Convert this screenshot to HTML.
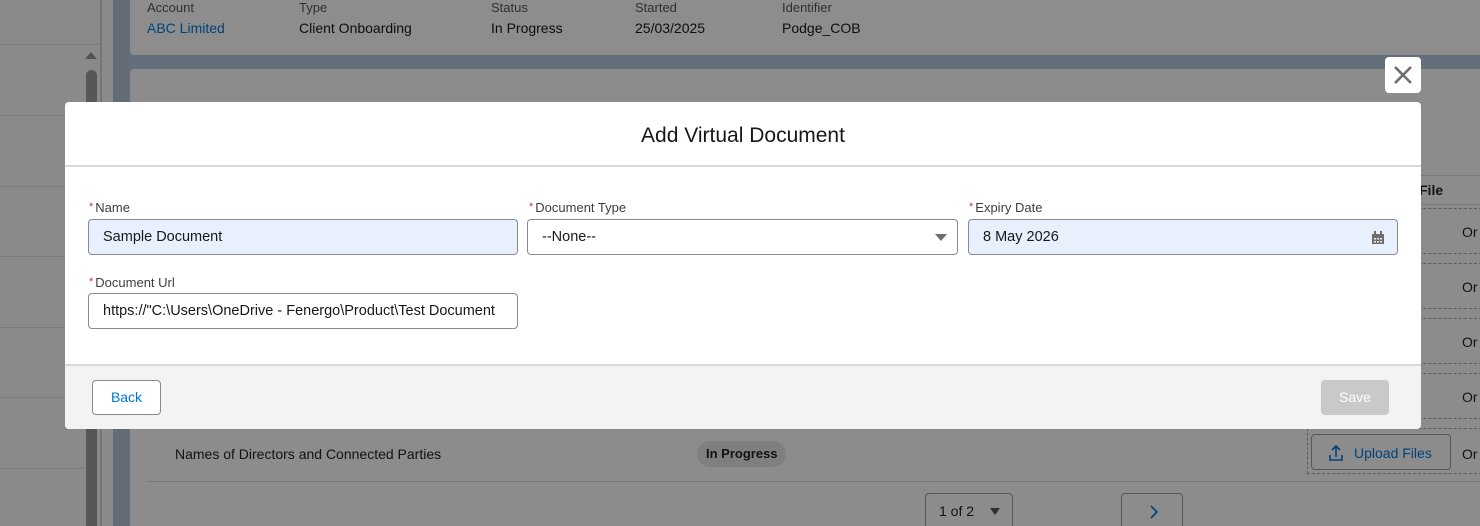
<!DOCTYPE html>
<html style="width:1480px;height:526px;overflow:hidden"><head><style>
*{box-sizing:border-box;margin:0;padding:0}
body{width:1480px;height:526px;overflow:hidden;background:#f3f3f3;font-family:"Liberation Sans",sans-serif;position:relative;color:#181818}
.a{position:absolute}
.t{font-size:14px;white-space:nowrap}
.lbl{font-size:13px;color:#3e3e3e;position:absolute;white-space:nowrap}
.lbl b{color:#c23934;font-weight:normal;font-size:11px;margin-right:2px;position:relative;top:-2px}
.in{position:absolute;height:36px;border:1px solid #8a8a8a;border-radius:4px;font-size:14.5px;padding:0 14px;line-height:34px;white-space:nowrap;overflow:hidden;color:#181818}
.dash{position:absolute;left:1307px;width:180px;border:1px dashed #a0a0a0}
</style></head><body>
<div class="a" style="left:0;top:0;width:100px;height:526px;background:#f3f3f3"></div>
<div class="a" style="left:0;top:44px;width:100px;height:1px;background:#d8d8d8"></div>
<div class="a" style="left:0;top:115px;width:84px;height:1px;background:#d8d8d8"></div>
<div class="a" style="left:0;top:186px;width:84px;height:1px;background:#d8d8d8"></div>
<div class="a" style="left:0;top:256px;width:84px;height:1px;background:#d8d8d8"></div>
<div class="a" style="left:0;top:327px;width:84px;height:1px;background:#d8d8d8"></div>
<div class="a" style="left:0;top:397px;width:84px;height:1px;background:#d8d8d8"></div>
<div class="a" style="left:0;top:468px;width:84px;height:1px;background:#d8d8d8"></div>
<div class="a" style="left:85px;top:52px;width:0;height:0;border-left:6px solid transparent;border-right:6px solid transparent;border-bottom:7px solid #909090"></div>
<div class="a" style="left:86px;top:70px;width:11px;height:456px;background:#999;border-radius:5px 5px 0 0"></div>
<div class="a" style="left:100px;top:0;width:2px;height:526px;background:#d0d0d0"></div>
<div class="a" style="left:113px;top:0;width:16px;height:526px;background:#aebccd"></div>
<div class="a" style="left:129px;top:0;width:1351px;height:526px;background:#b2c3da"></div>
<div class="a" style="left:130px;top:-6px;width:1360px;height:61px;background:#f8f8f8;border-radius:4px"></div>
<div class="a t" style="left:147px;top:0;font-size:13px;color:#555">Account</div>
<div class="a t" style="left:147px;top:20px;color:#0176d3">ABC Limited</div>
<div class="a t" style="left:299px;top:0;font-size:13px;color:#555">Type</div>
<div class="a t" style="left:299px;top:20px">Client Onboarding</div>
<div class="a t" style="left:491px;top:0;font-size:13px;color:#555">Status</div>
<div class="a t" style="left:491px;top:20px">In Progress</div>
<div class="a t" style="left:635px;top:0;font-size:13px;color:#555">Started</div>
<div class="a t" style="left:635px;top:20px">25/03/2025</div>
<div class="a t" style="left:782px;top:0;font-size:13px;color:#555">Identifier</div>
<div class="a t" style="left:782px;top:20px">Podge_COB</div>
<div class="a" style="left:130px;top:69px;width:1360px;height:470px;background:#f6f6f6;border-radius:4px"></div>
<div class="a" style="left:1307px;top:175px;width:180px;height:1px;background:#d8d8d8"></div>
<div class="a t" style="left:1419px;top:182px;font-weight:bold;color:#222">File</div>
<div class="a" style="left:1307px;top:204px;width:180px;height:1px;background:#d0d0d0"></div>
<div class="dash" style="top:208px;height:46px"></div>
<div class="dash" style="top:263px;height:46px"></div>
<div class="dash" style="top:318px;height:46px"></div>
<div class="dash" style="top:373px;height:46px"></div>
<div class="dash" style="top:428px;height:46px"></div>
<div class="a t" style="left:1462px;top:224px;color:#222">Or</div>
<div class="a t" style="left:1462px;top:279px;color:#222">Or</div>
<div class="a t" style="left:1462px;top:334px;color:#222">Or</div>
<div class="a t" style="left:1462px;top:389px;color:#222">Or</div>
<div class="a t" style="left:1462px;top:446px;color:#222">Or</div>
<div class="a" style="left:1311px;top:434px;width:140px;height:36px;border:1px solid #999;border-radius:4px"></div>
<svg class="a" style="left:1328px;top:444px" width="16" height="18" viewBox="0 0 16 18"><path d="M8 13V2M4 6l4-4 4 4M2 11v5h12v-5" fill="none" stroke="#0176d3" stroke-width="1.6"/></svg>
<div class="a t" style="left:1354px;top:445px;color:#0176d3">Upload Files</div>
<div class="a t" style="left:175px;top:446px;color:#222">Names of Directors and Connected Parties</div>
<div class="a" style="left:697px;top:441px;width:89px;height:26px;border-radius:13px;background:#e0e0e0"></div>
<div class="a t" style="left:706px;top:446px;font-size:13px;font-weight:bold;color:#222">In Progress</div>
<div class="a" style="left:148px;top:481px;width:1340px;height:1px;background:#cfcfcf"></div>
<div class="a" style="left:925px;top:493px;width:88px;height:40px;border:1px solid #999;border-radius:4px"></div>
<div class="a t" style="left:939px;top:503px;color:#222">1 of 2</div>
<div class="a" style="left:990px;top:508px;width:0;height:0;border-left:5px solid transparent;border-right:5px solid transparent;border-top:7px solid #555"></div>
<div class="a" style="left:1121px;top:493px;width:62px;height:40px;border:1px solid #999;border-radius:4px"></div>
<svg class="a" style="left:1149px;top:504px" width="10" height="16"><path d="M2 2l6 6-6 6" fill="none" stroke="#0176d3" stroke-width="1.6"/></svg>
<div class="a" style="left:0;top:0;width:1480px;height:526px;background:rgba(0,0,0,0.43)"></div>
<div class="a" style="left:1385px;top:57px;width:36px;height:36px;background:#fff;border-radius:4px"></div>
<svg class="a" style="left:1385px;top:57px" width="36" height="36"><path d="M10 10l16 16M26 10L10 26" stroke="#706e6b" stroke-width="2.6"/></svg>
<div class="a" style="left:65px;top:102px;width:1356px;height:327px;background:#fff;border-radius:4px;overflow:hidden">
  <div class="a" style="left:0;top:0;width:1356px;height:65px;border-bottom:2px solid #d8d8d8"></div>
  <div class="a" style="left:0;top:22px;width:1356px;text-align:center;font-size:21px;color:#181818">Add Virtual Document</div>
  <div class="a" style="left:0;top:262px;width:1356px;height:65px;background:#f3f3f3;border-top:2px solid #d8d8d8"></div>
</div>
<div class="lbl" style="left:89px;top:200px"><b>*</b>Name</div>
<div class="in" style="left:88px;top:219px;width:430px;background:#e8f0fe">Sample Document</div>
<div class="lbl" style="left:529px;top:200px"><b>*</b>Document Type</div>
<div class="in" style="left:527px;top:219px;width:431px;background:#fff">--None--</div>
<div class="a" style="left:935px;top:234px;width:0;height:0;border-left:6px solid transparent;border-right:6px solid transparent;border-top:7px solid #706e6b"></div>
<div class="lbl" style="left:969px;top:200px"><b>*</b>Expiry Date</div>
<div class="in" style="left:968px;top:219px;width:430px;background:#e8f0fe">8 May 2026</div>
<svg class="a" style="left:1371px;top:231px" width="14" height="14" viewBox="0 0 14 14"><rect x="1" y="3" width="12" height="10" fill="#706e6b"/><rect x="3" y="0" width="2" height="3" fill="#706e6b"/><rect x="9" y="0" width="2" height="3" fill="#706e6b"/><g fill="#e8f0fe"><rect x="3" y="7" width="2" height="1.5"/><rect x="6" y="7" width="2" height="1.5"/><rect x="9" y="7" width="2" height="1.5"/><rect x="3" y="10" width="2" height="1.5"/><rect x="6" y="10" width="2" height="1.5"/><rect x="9" y="10" width="2" height="1.5"/></g></svg>
<div class="lbl" style="left:89px;top:275px"><b>*</b>Document Url</div>
<div class="in" style="left:88px;top:293px;width:430px;background:#fff;padding-right:18px">https://"C:\Users\OneDrive - Fenergo\Product\Test Document</div>
<div class="a" style="left:92px;top:380px;width:69px;height:35px;border:1px solid #8a8a8a;border-radius:4px;background:#fff;text-align:center;line-height:33px;font-size:14px;color:#0176d3">Back</div>
<div class="a" style="left:1321px;top:380px;width:68px;height:35px;border-radius:4px;background:#c9c9c9;text-align:center;line-height:35px;font-size:14px;color:#fff">Save</div>
</body></html>
